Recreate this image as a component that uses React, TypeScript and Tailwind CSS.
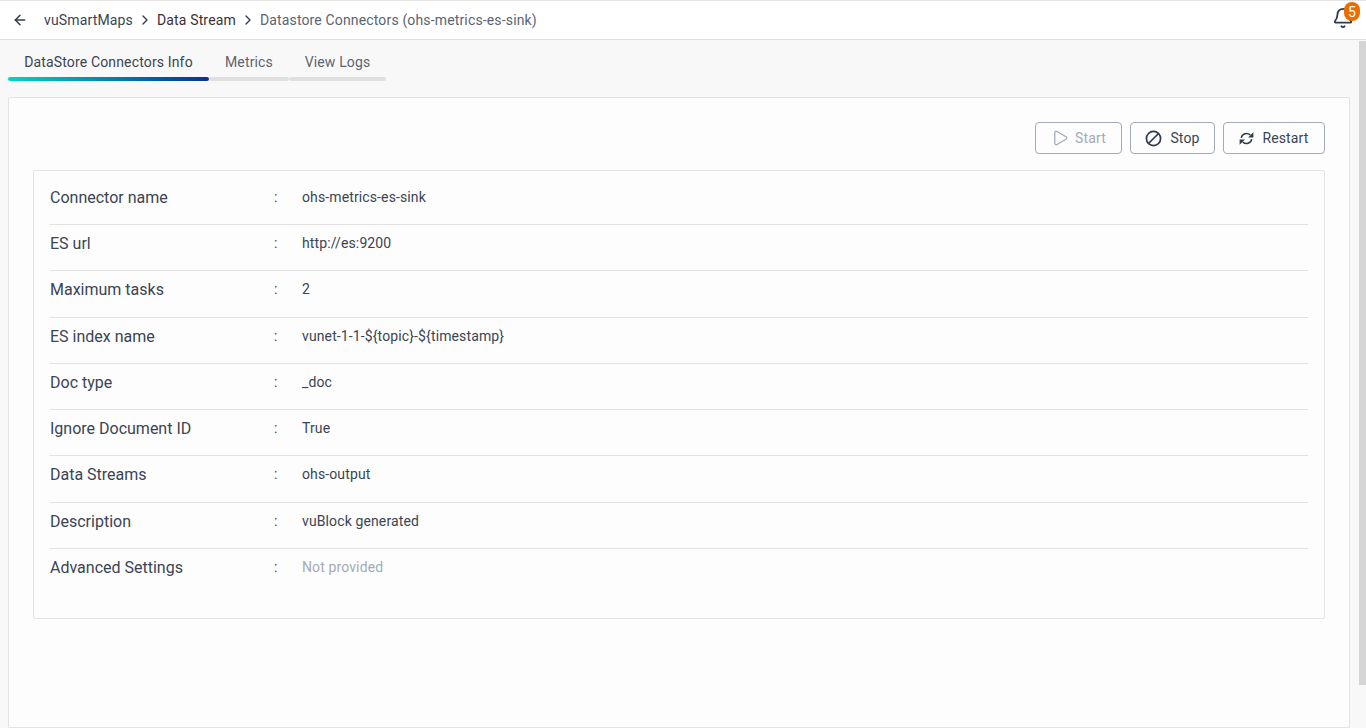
import { Ban, Bell, Play, ArrowLeft, ChevronRight } from "lucide-react";

const rows = [
  { label: "Connector name", value: "ohs-metrics-es-sink" },
  { label: "ES url", value: "http://es:9200" },
  { label: "Maximum tasks", value: "2" },
  { label: "ES index name", value: "vunet-1-1-${topic}-${timestamp}" },
  { label: "Doc type", value: "_doc" },
  { label: "Ignore Document ID", value: "True" },
  { label: "Data Streams", value: "ohs-output" },
  { label: "Description", value: "vuBlock generated" },
  { label: "Advanced Settings", value: "Not provided", muted: true },
];

function SyncIcon() {
  return (
    <svg viewBox="0 0 24 24" className="h-[15px] w-[15px] text-[#2f3b4c]" fill="none">
      <path d="M3.6 11 A8.5 8.5 0 0 1 18 6.5" stroke="currentColor" strokeWidth="2.4" />
      <polygon points="23,2 23,10.5 14.5,10.5" fill="currentColor" />
      <path d="M20.4 13 A8.5 8.5 0 0 1 6 17.5" stroke="currentColor" strokeWidth="2.4" />
      <polygon points="1,22 1,13.5 9.5,13.5" fill="currentColor" />
    </svg>
  );
}

export default function App() {
  return (
    <div className="relative flex h-[728px] flex-col overflow-hidden bg-[#f8f8f8] font-['Roboto',sans-serif]">
      {/* top bar */}
      <header className="flex h-10 shrink-0 items-center border-t border-b border-t-[#e4e4e4] border-b-[#dedede] bg-white pr-[12px] pl-[12px]">
        <ArrowLeft className="h-4 w-4 text-[#2f3b4c]" strokeWidth={2.2} />
        <nav className="ml-[16px] flex items-center text-sm tracking-[0.15px]">
          <span className="text-[#3a4454]">vuSmartMaps</span>
          <ChevronRight className="mx-1 h-4 w-4 text-[#2f3b4c]" strokeWidth={2} />
          <span className="text-[#3b3038]">Data Stream</span>
          <ChevronRight className="mx-1 h-4 w-4 text-[#2f3b4c]" strokeWidth={2} />
          <span className="text-[#5b6473]">Datastore Connectors (ohs-metrics-es-sink)</span>
        </nav>
        <div className="relative ml-auto h-6 w-6">
          <Bell className="absolute top-[-1px] left-[2px] h-[22px] w-[22px] text-[#2f3b4c]" strokeWidth={2} />
          <span className="absolute top-[-6px] left-[14px] flex h-[19px] w-4 items-center justify-center rounded-full bg-[#ec6c00] text-sm text-white">
            5
          </span>
        </div>
      </header>

      {/* tabs */}
      <div className="flex h-[41px] shrink-0 pl-2 text-sm tracking-[0.15px]">
        <div className="flex w-[201px] flex-col">
          <span className="flex flex-1 items-center justify-center pt-[6px] text-[#3b4452]">DataStore Connectors Info</span>
          <div className="h-[4px] rounded-full bg-gradient-to-r from-[#00d6c0] to-[#122d94]" />
        </div>
        <div className="flex w-[80px] flex-col">
          <span className="flex flex-1 items-center justify-center pt-[6px] text-[#5b6473]">Metrics</span>
          <div className="h-[4px] rounded-full bg-[#dfdfdf]" />
        </div>
        <div className="flex w-[97px] flex-col">
          <span className="flex flex-1 items-center justify-center pt-[6px] text-[#5b6473]">View Logs</span>
          <div className="h-[4px] rounded-full bg-[#dfdfdf]" />
        </div>
      </div>

      {/* card */}
      <main className="mt-[16px] mr-[16px] ml-2 flex-1 rounded-t-[2px] border border-[#e4e4e4] bg-[#fdfdfd] px-6 pt-6">
        <div className="flex justify-end gap-2 text-sm tracking-[0.15px]">
          <button className="flex h-8 w-[87px] items-center justify-center gap-[6px] rounded border border-[#a3abb6] text-[#a3abb6]">
            <Play className="h-[18px] w-[18px]" strokeWidth={1.7} />
            Start
          </button>
          <button className="flex h-8 w-[85px] items-center justify-center gap-[8px] rounded border border-[#a3abb6] text-[#3a4454]">
            <Ban className="h-[17px] w-[17px] -scale-x-100 text-[#2f3b4c]" strokeWidth={2.4} />
            Stop
          </button>
          <button className="flex h-8 w-[102px] items-center justify-center gap-[8px] rounded border border-[#a3abb6] text-[#3a4454]">
            <SyncIcon />
            Restart
          </button>
        </div>

        <div className="mt-4 h-[449px] rounded-[2px] border border-[#e4e4e4] px-4 pt-[7.75px]">
          {rows.map((row, i) => (
            <div
              key={row.label}
              className={`flex h-[46.25px] items-center pb-[7px] ${i < rows.length - 1 ? "border-b border-[#e2e2e2]" : ""}`}
            >
              <span className="w-[224px] text-base text-[#3a4454]">{row.label}</span>
              <span className="mb-[2px] w-[28px] text-sm text-[#3a4454]">:</span>
              <span className={`mb-[2px] text-sm tracking-[0.12px] ${row.muted ? "text-[#a3abb6]" : "text-[#3a4454]"}`}>{row.value}</span>
            </div>
          ))}
        </div>
      </main>

      {/* scrollbar */}
      <div className="absolute top-[40px] right-0 bottom-0 w-[16px] bg-[#f8f8f8]">
        <div className="absolute top-[1px] right-0 h-[644px] w-[7px] bg-[#d5d5d5]" />
      </div>
    </div>
  );
}
